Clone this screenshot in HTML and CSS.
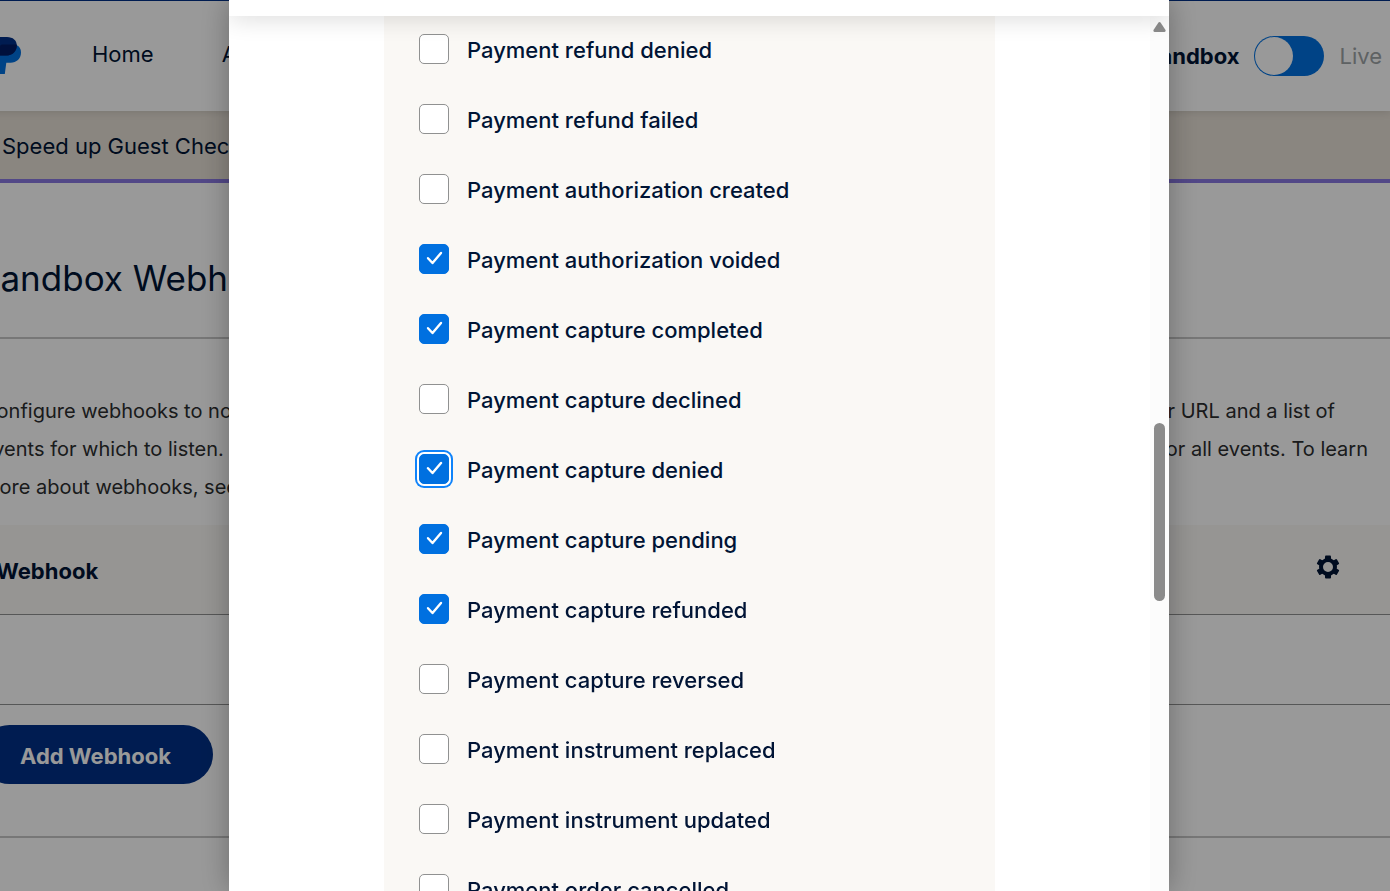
FILE: index.html
```html
<!DOCTYPE html>
<html lang="en">
<head>
<meta charset="utf-8">
<title>Sandbox Webhooks</title>
<link rel="stylesheet" href="styles.css">
</head>
<body>
<div class="page">
  <header class="topbar">
    <a class="logo" href="#" aria-label="PayPal">
      <svg width="33" height="38" viewBox="-12 37 33 38">
        <path fill="#0070e0" d="M16.500 45C19.500 46.500 21 49 21 52.500C21 58.500 16.500 62.800 10.500 62.800H6.300L4.800 74H-5L-1 45Z"/>
        <path fill="#003087" d="M-8 37H7C13 37 16.800 40.500 16.800 45.500C16.800 51.500 12.500 55.500 6 55.500H-1L-3 68H-12Z"/>
        <path fill="#001c64" d="M2 44.500H16.700C17.200 51 12.500 55.500 6 55.500H-1L0 46.500C.2 45.300 1 44.500 2 44.500Z"/>
      </svg>
    </a>
    <nav class="nav">
      <a href="#">Home</a>
      <a href="#">Apps</a>
    </nav>
    <div class="mode">
      <label class="mode-on" for="mode">Sandbox</label>
      <input class="switch" id="mode" type="checkbox" role="switch">
      <span class="mode-off">Live</span>
    </div>
  </header>
  <div class="banner">Speed up Guest Checkout</div>
  <main>
    <h1 class="title">Sandbox Webhooks</h1>
    <div class="intro">
      <p class="line"><span>Configure webhooks to notify your app</span><span class="inset">define your listener URL and a list of</span></p>
      <p class="line"><span>events for which to listen. You can</span><span>or subscribe for all events. To learn</span></p>
      <p class="line"><span>more about webhooks, see the guide.</span></p>
    </div>
    <table class="hooks">
      <thead>
        <tr>
          <th scope="col">Webhook</th>
          <th scope="col" class="tools">
            <button class="gear" aria-label="Settings">
              <svg width="24" height="24" viewBox="-12 -12 24 24">
                <circle r="7" fill="none" stroke="#001435" stroke-width="4"/>
                <g fill="#001435">
                  <rect x="-3" y="-11.500" width="6" height="5" rx="1"/>
                  <rect x="-3" y="-11.500" width="6" height="5" rx="1" transform="rotate(60)"/>
                  <rect x="-3" y="-11.500" width="6" height="5" rx="1" transform="rotate(120)"/>
                  <rect x="-3" y="-11.500" width="6" height="5" rx="1" transform="rotate(180)"/>
                  <rect x="-3" y="-11.500" width="6" height="5" rx="1" transform="rotate(240)"/>
                  <rect x="-3" y="-11.500" width="6" height="5" rx="1" transform="rotate(300)"/>
                </g>
              </svg>
            </button>
          </th>
        </tr>
      </thead>
      <tbody><tr><td></td><td></td></tr></tbody>
    </table>
    <div class="actions"><button class="add">Add Webhook</button></div>
  </main>
</div>

<div class="overlay">
  <section class="modal" role="dialog" aria-label="Event types">
    <div class="modal-head"></div>
    <div class="modal-body">
      <div class="content">
        <ul class="events">
          <li><span class="box"><input type="checkbox" id="e1"><svg viewBox="0 0 30 30"><path d="M9 14.200L13.500 19L22 9"/></svg></span><label for="e1">Payment refund denied</label></li>
          <li><span class="box"><input type="checkbox" id="e2"><svg viewBox="0 0 30 30"><path d="M9 14.200L13.500 19L22 9"/></svg></span><label for="e2">Payment refund failed</label></li>
          <li><span class="box"><input type="checkbox" id="e3"><svg viewBox="0 0 30 30"><path d="M9 14.200L13.500 19L22 9"/></svg></span><label for="e3">Payment authorization created</label></li>
          <li><span class="box"><input type="checkbox" id="e4" checked><svg viewBox="0 0 30 30"><path d="M9 14.200L13.500 19L22 9"/></svg></span><label for="e4">Payment authorization voided</label></li>
          <li><span class="box"><input type="checkbox" id="e5" checked><svg viewBox="0 0 30 30"><path d="M9 14.200L13.500 19L22 9"/></svg></span><label for="e5">Payment capture completed</label></li>
          <li><span class="box"><input type="checkbox" id="e6"><svg viewBox="0 0 30 30"><path d="M9 14.200L13.500 19L22 9"/></svg></span><label for="e6">Payment capture declined</label></li>
          <li><span class="box"><input type="checkbox" id="e7" class="focused" checked><svg viewBox="0 0 30 30"><path d="M9 14.200L13.500 19L22 9"/></svg></span><label for="e7">Payment capture denied</label></li>
          <li><span class="box"><input type="checkbox" id="e8" checked><svg viewBox="0 0 30 30"><path d="M9 14.200L13.500 19L22 9"/></svg></span><label for="e8">Payment capture pending</label></li>
          <li><span class="box"><input type="checkbox" id="e9" checked><svg viewBox="0 0 30 30"><path d="M9 14.200L13.500 19L22 9"/></svg></span><label for="e9">Payment capture refunded</label></li>
          <li><span class="box"><input type="checkbox" id="e10"><svg viewBox="0 0 30 30"><path d="M9 14.200L13.500 19L22 9"/></svg></span><label for="e10">Payment capture reversed</label></li>
          <li><span class="box"><input type="checkbox" id="e11"><svg viewBox="0 0 30 30"><path d="M9 14.200L13.500 19L22 9"/></svg></span><label for="e11">Payment instrument replaced</label></li>
          <li><span class="box"><input type="checkbox" id="e12"><svg viewBox="0 0 30 30"><path d="M9 14.200L13.500 19L22 9"/></svg></span><label for="e12">Payment instrument updated</label></li>
          <li><span class="box"><input type="checkbox" id="e13"><svg viewBox="0 0 30 30"><path d="M9 14.200L13.500 19L22 9"/></svg></span><label for="e13">Payment order cancelled</label></li>
        </ul>
      </div>
      <div class="scrollbar">
        <svg width="13" height="10" viewBox="0 0 13 10"><path fill="#8b8b8b" d="M5.300.8Q6.500-.6 7.700.8L12.500 8Q13 9.800 11.500 10H1.500Q0 9.800.5 8Z"/></svg>
        <div class="thumb"></div>
      </div>
    </div>
  </section>
</div>
</body>
</html>
```

FILE: styles.css
```css
* { box-sizing: border-box; }

body {
  margin: 0;
  height: 100vh;
  overflow: hidden;
  background: #fff;
  color: #001435;
  font: 400 22px/30px Inter, "Liberation Sans", sans-serif;
}

a { color: inherit; text-decoration: none; }
button { font: inherit; border: 0; cursor: pointer; }

/* Page behind the dialog */
.page { margin-left: -20px; }

.topbar {
  position: relative;
  display: flex;
  align-items: center;
  height: 111px;
  padding: 0 8px;
  border-top: 1px solid #003087;
  background: #fff;
  box-shadow: 0 1px 8px rgba(0, 0, 0, .12);
}
.logo { display: flex; margin-right: 71px; }
.nav { display: flex; gap: 68px; padding-bottom: 4px; }
.mode { display: flex; align-items: center; gap: 15px; margin-left: auto; }
.mode-on { font-weight: 700; }
.mode-off { color: #9da3a6; }

.switch {
  appearance: none;
  width: 70px;
  height: 40px;
  margin: 0;
  padding: 1px;
  border-radius: 20px;
  background: #0070e0;
}
.switch::before {
  content: "";
  display: block;
  width: 38px;
  height: 38px;
  border-radius: 50%;
  background: #fff;
}

.banner {
  height: 72px;
  padding: 20px 22px;
  border-bottom: 4px solid #8978e1;
  background: #e6dfd5;
}

.title {
  margin: 0 0 0 -2px;
  height: 156px;
  padding-top: 73px;
  border-bottom: 2px solid #c6c6c6;
  font-size: 35px;
  font-weight: 400;
  line-height: 44px;
}

.intro {
  padding: 53px 22px 19px 2px;
  color: #2c2e2f;
  font-size: 20px;
  line-height: 38px;
}
.line { display: flex; justify-content: space-between; margin: 0; }
.inset { padding-right: 33px; }

.hooks { width: 100%; border-spacing: 0; }
.hooks th {
  height: 90px;
  padding: 3px 16px 0;
  border-bottom: 1px solid #909191;
  background: #faf8f5;
  font-weight: 700;
  text-align: left;
}
.hooks td { height: 90px; padding: 0; border-bottom: 1px solid #909191; }
.hooks .tools { padding: 0 50px; text-align: right; }
.gear { padding: 2px 0 0; background: none; color: inherit; }
.gear svg { display: block; }

.actions { padding: 20px 0 52px; border-bottom: 2px solid #c6c6c6; }
.add {
  height: 59px;
  padding: 2px 42px 0 40px;
  border-radius: 30px;
  background: #003087;
  color: #fff;
  font-weight: 700;
}

/* Dialog */
.overlay {
  position: fixed;
  inset: 0;
  display: flex;
  justify-content: center;
  padding-left: 8px;
  background: rgba(0, 0, 0, .4);
}
.modal {
  display: flex;
  flex-direction: column;
  width: 100%;
  max-width: 940px;
  background: #fff;
  box-shadow: 0 0 28px rgba(0, 0, 0, .3);
}
.modal-head {
  position: relative;
  flex: none;
  height: 16px;
  background: #fff;
  box-shadow: 0 0 26px rgba(0, 0, 0, .2);
  clip-path: inset(0 0 -40px 0);
}
.modal-body { display: flex; flex: 1; min-height: 0; overflow: hidden; }
.content { flex: 1; padding: 0 155px; }

.events {
  display: grid;
  gap: 40px;
  margin: 0;
  padding: 18px 35px;
  list-style: none;
  background: #faf8f5;
}
.events li { display: flex; gap: 18px; height: 30px; }
.events label { padding-top: 1px; font-weight: 500; white-space: nowrap; }

.box { display: grid; width: 30px; height: 30px; }
.box > * { grid-area: 1 / 1; width: 30px; height: 30px; }
.box input {
  appearance: none;
  margin: 0;
  border: 1px solid #909191;
  border-radius: 5px;
  background: #fff;
}
.box input:checked { border-color: #0070e0; background: #0070e0; }
.box .focused { box-shadow: 0 0 0 2px #fff, 0 0 0 4px #0f83fa; }
.box svg {
  display: none;
  fill: none;
  stroke: #fff;
  stroke-width: 2.4;
  stroke-linecap: round;
  stroke-linejoin: round;
  pointer-events: none;
}
.box input:checked + svg { display: block; }

.scrollbar {
  display: flex;
  flex-direction: column;
  align-items: center;
  width: 19px;
  padding-top: 6px;
  background: #fcfcfc;
}
.scrollbar svg { flex: none; }
.scrollbar::before { content: ""; order: 1; flex: 391; }
.scrollbar::after { content: ""; order: 3; flex: 290; }
.thumb { order: 2; flex: 178; width: 11px; border-radius: 6px; background: #8b8b8b; }
```
